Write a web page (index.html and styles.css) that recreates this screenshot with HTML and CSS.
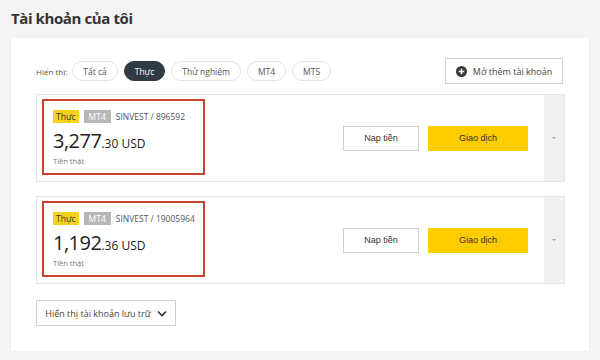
FILE: index.html
```html
<!DOCTYPE html>
<html>
<head>
    <title>Tài khoản của tôi</title>
    <link rel="stylesheet" href="styles.css">
</head>
<body>
    <h1 class="page-title">Tài khoản của tôi</h1>

    <div class="panel">
        <div class="toolbar">
            <div class="filters">
                <span class="filter-label">Hiển thị:</span>
                <button class="pill" type="button">Tất cả</button>
                <button class="pill active" type="button">Thực</button>
                <button class="pill" type="button">Thử nghiệm</button>
                <button class="pill" type="button">MT4</button>
                <button class="pill" type="button">MT5</button>
            </div>
            <button class="open-account" type="button">
                <svg width="11" height="11" viewBox="0 0 16 16">
                    <circle cx="8" cy="8" r="8" fill="#3a3a3a"/>
                    <path d="M8 4v8M4 8h8" stroke="#fff" stroke-width="2.2"/>
                </svg>
                Mở thêm tài khoản
            </button>
        </div>

        <div class="account">
            <div class="account-info">
                <div class="tags">
                    <span class="tag tag-real">Thực</span>
                    <span class="tag tag-platform">MT4</span>
                    <span class="account-name">SINVEST / 896592</span>
                </div>
                <div class="balance"><span class="balance-int">3,277</span>.30 USD</div>
                <div class="balance-type">Tiền thật</div>
            </div>
            <div class="actions">
                <button class="btn btn-outline" type="button">Nap tiền</button>
                <button class="btn btn-yellow" type="button">Giao dịch</button>
            </div>
            <div class="toggle"><span class="caret"></span></div>
        </div>

        <div class="account">
            <div class="account-info">
                <div class="tags">
                    <span class="tag tag-real">Thực</span>
                    <span class="tag tag-platform">MT4</span>
                    <span class="account-name">SINVEST / 19005964</span>
                </div>
                <div class="balance"><span class="balance-int">1,192</span>.36 USD</div>
                <div class="balance-type">Tiền thật</div>
            </div>
            <div class="actions">
                <button class="btn btn-outline" type="button">Nap tiền</button>
                <button class="btn btn-yellow" type="button">Giao dịch</button>
            </div>
            <div class="toggle"><span class="caret"></span></div>
        </div>

        <button class="archive" type="button">
            Hiển thị tài khoản lưu trữ
            <svg width="10" height="7" viewBox="0 0 10 7">
                <path d="M1 1.5l4 4 4-4" fill="none" stroke="#333" stroke-width="1.6"/>
            </svg>
        </button>
    </div>
</body>
</html>
```

FILE: styles.css
```css
body {
    margin: 0;
    background-color: #f4f4f4;
    font-family: "Open Sans", "Noto Sans", sans-serif;
    color: #333;
}

.page-title {
    margin: 0;
    padding: 8px 11px 0;
    height: 30px;
    font-size: 15px;
    font-weight: 700;
    letter-spacing: -0.4px;
    color: #333;
}

.panel {
    margin: 0 11px;
    padding: 20px 24px 25px 25px;
    background-color: #fff;
    box-shadow: 0 1px 2px rgba(0, 0, 0, 0.08);
}

.toolbar {
    display: flex;
    justify-content: space-between;
    align-items: center;
    margin-bottom: 10px;
}

.filters {
    display: flex;
    align-items: center;
    gap: 6px;
}

.filter-label {
    font-size: 8px;
    color: #555;
    margin-right: -1px;
}

.pill {
    height: 20px;
    padding: 0 10px;
    border: 1px solid #e3e3e3;
    border-radius: 10px;
    background-color: #fff;
    font-family: inherit;
    font-size: 8.5px;
    color: #555;
}

.pill.active {
    background-color: #2f3a45;
    border-color: #2f3a45;
    color: #fff;
}

.open-account {
    display: flex;
    align-items: center;
    gap: 6px;
    height: 26px;
    width: 118px;
    margin-right: 2px;
    justify-content: center;
    border: 1px solid #cfcfcf;
    background-color: #fff;
    font-family: inherit;
    font-size: 9px;
    color: #444;
}

.account {
    display: flex;
    align-items: center;
    height: 86px;
    border: 1px solid #e6e6e6;
    margin-bottom: 14px;
}

.account-info {
    align-self: flex-start;
    width: 163px;
    height: 76px;
    margin: 4px 0 0 5px;
    padding: 9px 0 0 9px;
    box-sizing: border-box;
    border: 2px solid #c8432b;
}

.tags {
    display: flex;
    align-items: center;
    gap: 5px;
}

.tag {
    font-size: 8.5px;
    line-height: 13px;
    padding: 0 3px;
}

.tag-real {
    background-color: #f6d21a;
    color: #333;
}

.tag-platform {
    padding: 0 5px;
    background-color: #b7b7b7;
    color: #fff;
}

.account-name {
    font-size: 8.5px;
    color: #555;
}

.balance {
    margin-top: 6px;
    font-size: 12px;
    color: #222;
    line-height: 24px;
}

.balance-int {
    font-size: 20px;
    letter-spacing: -0.5px;
}

.balance-type {
    font-size: 7.5px;
    color: #777;
}

.actions {
    display: flex;
    gap: 9px;
    margin-left: auto;
    margin-right: 16px;
}

.btn {
    height: 25px;
    font-family: "Liberation Sans", Arial, sans-serif;
    font-size: 9px;
    color: #333;
}

.btn-outline {
    width: 76px;
    border: 1px solid #cfcfcf;
    background-color: #fff;
}

.btn-yellow {
    width: 100px;
    border: none;
    background-color: #ffcc00;
}

.toggle {
    align-self: stretch;
    width: 20px;
    background-color: #f1f1f1;
    display: flex;
    align-items: center;
    justify-content: center;
}

.caret {
    width: 0;
    height: 0;
    border-left: 2px solid transparent;
    border-right: 2px solid transparent;
    border-top: 2px solid #aaa;
}

.archive {
    display: flex;
    align-items: center;
    gap: 6px;
    margin-top: 16px;
    height: 26px;
    width: 140px;
    justify-content: center;
    border: 1px solid #cfcfcf;
    background-color: #fff;
    font-family: inherit;
    font-size: 9px;
    color: #444;
}
```
